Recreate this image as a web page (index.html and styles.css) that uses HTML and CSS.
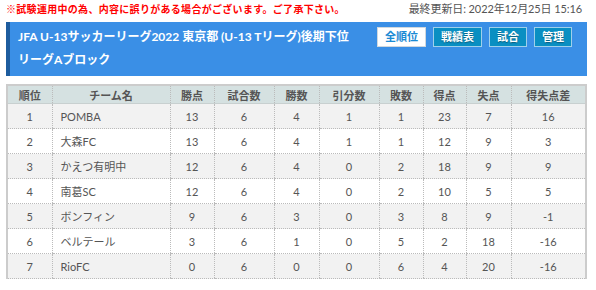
FILE: index.html
```html
<!DOCTYPE html>
<html lang="ja">
<head>
<meta charset="utf-8">
<link rel="stylesheet" href="styles.css">
</head>
<body>
<div class="page">
  <div class="topline">
    <p class="notice">※試験運用中の為、内容に誤りがある場合がございます。ご了承下さい。</p>
    <p class="updated">最終更新日: 2022年12月25日 15:16</p>
  </div>
  <div class="bar">
    <h1 class="title">JFA U-13サッカーリーグ2022 東京都 (U-13 Tリーグ)後期下位<br>リーグAブロック</h1>
    <div class="btns">
      <span class="btn btn-active">全順位</span>
      <span class="btn">戦績表</span>
      <span class="btn">試合</span>
      <span class="btn">管理</span>
    </div>
  </div>
  <table class="standings">
    <colgroup>
      <col class="c45"><col class="c118"><col class="c44"><col class="c60"><col class="c45"><col class="c60"><col class="c44"><col class="c43"><col class="c45"><col>
    </colgroup>
    <thead>
      <tr><th>順位</th><th>チーム名</th><th>勝点</th><th>試合数</th><th>勝数</th><th>引分数</th><th>敗数</th><th>得点</th><th>失点</th><th>得失点差</th></tr>
    </thead>
    <tbody>
      <tr><td>1</td><td class="team">POMBA</td><td>13</td><td>6</td><td>4</td><td>1</td><td>1</td><td>23</td><td>7</td><td>16</td></tr>
      <tr><td>2</td><td class="team">大森FC</td><td>13</td><td>6</td><td>4</td><td>1</td><td>1</td><td>12</td><td>9</td><td>3</td></tr>
      <tr><td>3</td><td class="team">かえつ有明中</td><td>12</td><td>6</td><td>4</td><td>0</td><td>2</td><td>18</td><td>9</td><td>9</td></tr>
      <tr><td>4</td><td class="team">南葛SC</td><td>12</td><td>6</td><td>4</td><td>0</td><td>2</td><td>10</td><td>5</td><td>5</td></tr>
      <tr><td>5</td><td class="team">ボンフィン</td><td>9</td><td>6</td><td>3</td><td>0</td><td>3</td><td>8</td><td>9</td><td>-1</td></tr>
      <tr><td>6</td><td class="team">ベルテール</td><td>3</td><td>6</td><td>1</td><td>0</td><td>5</td><td>2</td><td>18</td><td>-16</td></tr>
      <tr><td>7</td><td class="team">RioFC</td><td>0</td><td>6</td><td>0</td><td>0</td><td>6</td><td>4</td><td>20</td><td>-16</td></tr>
    </tbody>
  </table>
</div>
</body>
</html>
```
FILE: styles.css
```css
html, body {
  margin: 0;
  padding: 0;
  background: #fff;
}
body {
  font-family: "Lato", "Noto Sans CJK JP", sans-serif;
  color: #555;
}
.page {
  padding: 0 9px 0 6px;
}
.topline {
  display: flex;
  justify-content: space-between;
  align-items: flex-start;
  height: 22px;
}
.topline p {
  margin: 0;
}
.notice {
  color: #f00;
  font-weight: bold;
  font-size: 10px;
  letter-spacing: 0.3px;
  line-height: 18px;
}
.updated {
  font-size: 11px;
  color: #555;
  line-height: 18px;
  padding-right: 5px;
  letter-spacing: -0.1px;
}
.bar {
  display: flex;
  justify-content: space-between;
  align-items: flex-start;
  background: #3a8fe6;
  border-left: 4px solid #1d5c9e;
  padding: 3px 15px 5px 8px;
  height: 46px;
}
.title {
  margin: 0;
  color: #fff;
  font-size: 12px;
  font-weight: bold;
  line-height: 23px;
  font-family: "Lato", "Noto Sans CJK JP", sans-serif;
}
.btns {
  display: flex;
  gap: 7px;
  margin-top: 2px;
}
.btn {
  display: block;
  height: 18px;
  line-height: 18px;
  padding: 0 7px;
  border: 1px solid #9fd0ea;
  background: #0a8fc2;
  color: #fff;
  font-size: 11px;
  font-weight: bold;
  text-shadow: 0 1px 1px rgba(0,0,0,0.35);
}
.btn-active {
  background: #fff;
  color: #1a8ad4;
  border-color: #d0d8de;
  text-shadow: none;
}
.standings {
  margin-top: 8px;
  width: 581px;
  border-collapse: collapse;
  table-layout: fixed;
  border-top: 2px solid #ccc;
  border-left: 2px solid #ccc;
  border-right: 2px solid #ccc;
  font-size: 11px;
}
.c45 { width: 45px; }
.c118 { width: 118px; }
.c44 { width: 44px; }
.c60 { width: 60px; }
.c43 { width: 43px; }
.standings th {
  background: #d5e1e1;
  color: #555;
  font-weight: bold;
  height: 17px;
  padding: 0;
  border-left: 1px dotted #bbb;
  border-bottom: 1px solid #c8d0d0;
  text-align: center;
}
.standings td {
  height: 24px;
  padding: 0;
  text-align: center;
  border-left: 1px dotted #bbb;
  border-bottom: 1px dotted #bbb;
  color: #555;
}
.standings td.team {
  text-align: left;
  padding-left: 8px;
}
.standings tbody tr:nth-child(odd) td {
  background: #f2f2f2;
}
.standings th:first-child,
.standings td:first-child {
  border-left: none;
}
```
